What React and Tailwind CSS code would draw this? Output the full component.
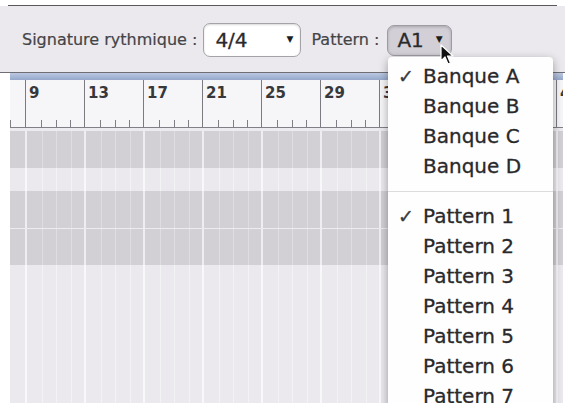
import React from "react";

const bars = [9, 13, 17, 21, 25, 29, 33, 37, 41, 45];
const banks = ["Banque A", "Banque B", "Banque C", "Banque D"];
const patterns = [1, 2, 3, 4, 5, 6, 7, 8];

function Ruler() {
  return (
    <div className="flex h-[48px] bg-[#f6f5f8] border-b border-[#808086] overflow-hidden">
      <div className="w-[15px] shrink-0 flex items-end">
        <div className="w-px h-[7px] bg-[#7e7e84]" />
      </div>
      {bars.map((n) => (
        <div key={n} className="w-[59px] shrink-0 border-l border-[#7a7a80] flex flex-col justify-between">
          <span className="pl-[3px] pt-[6px] text-[15px] font-bold leading-none text-[#38383a]">{n}</span>
          <div className="flex h-[7px]">
            {[0, 1, 2, 3].map((i) => (
              <div key={i} className="w-[14.75px] shrink-0 flex">
                {i > 0 && <div className="w-px h-full bg-[#7e7e84]" />}
              </div>
            ))}
          </div>
        </div>
      ))}
    </div>
  );
}

function Track({ className, dark }) {
  const bar = dark ? "border-[#efedf1]" : "border-[#f8f7fa]";
  const beat = dark ? "border-[#dfdce2]" : "border-[#f3f2f5]";
  return (
    <div className={`flex overflow-hidden ${dark ? "bg-[#d2cfd5]" : "bg-[#ebe9ee]"} ${className}`}>
      <div className="w-[15px] shrink-0" />
      {bars.map((n) => (
        <div key={n} className={`w-[59px] shrink-0 border-l-2 ${bar} flex`}>
          {[0, 1, 2, 3].map((i) => (
            <div key={i} className={`w-[14.5px] shrink-0 ${i > 0 ? `border-l ${beat}` : ""}`} />
          ))}
        </div>
      ))}
    </div>
  );
}

function Check() {
  return <span className="w-[25px] shrink-0 text-[19px] font-bold text-[#3a3a3c]">✓</span>;
}

export default function App() {
  return (
    <div className="w-[565px] h-[403px] relative overflow-hidden bg-white font-['DejaVu_Sans',sans-serif]">
      <div className="h-[5px]" />
      <div className="mx-[8px] h-px bg-[#58585c]" />

      {/* toolbar */}
      <div className="h-[66px] bg-[#ebe9ed] flex items-center pl-[22px] pt-[2px]">
        <span className="text-[16px] text-[#444447] whitespace-nowrap [-webkit-text-stroke:0.2px]">Signature rythmique :</span>
        <div className="ml-[6px] w-[98px] h-[34px] rounded-[7px] border border-[#a4a3a8] bg-white shadow-[inset_0_1px_2px_rgba(0,0,0,0.15)] flex items-center pl-[11px] pr-[7px] justify-between">
          <span className="text-[20px] text-[#2a2a2c] [-webkit-text-stroke:0.3px]">4/4</span>
          <span className="text-[9px] text-[#1e1e1e]">▼</span>
        </div>
        <span className="ml-[10px] text-[16px] text-[#444447] whitespace-nowrap [-webkit-text-stroke:0.2px]">Pattern :</span>
        <div className="ml-[8px] w-[65px] h-[31px] rounded-[7px] border border-[#9e9ca3] bg-[#d2cfd6] shadow-[inset_0_1px_3px_rgba(0,0,0,0.2)] flex items-center pl-[9px] gap-[12px]">
          <span className="text-[20px] text-[#2a2a2c] [-webkit-text-stroke:0.3px]">A1</span>
          <span className="text-[9px] text-[#1e1e1e]">▼</span>
        </div>
      </div>

      <div className="h-px bg-[#6e6e74]" />

      <div className="pl-[10px] pr-[2px]">
        <div className="h-[7px] bg-gradient-to-b from-[#bcc8e2] to-[#97a8cb]" />
        <Ruler />
        <div className="h-[3px] bg-[#ecebef]" />
        <Track dark className="h-[37px]" />
        <Track className="h-[23px]" />
        <Track dark className="h-[37px]" />
        <div className="h-px bg-[#ecebef]" />
        <Track dark className="h-[36px]" />
        <Track className="h-[140px]" />
      </div>

      {/* dropdown menu */}
      <div className="absolute left-[388px] top-[57px] w-[165px] h-[360px] bg-[#fefefe] rounded-[4px] shadow-[0_3px_10px_rgba(0,0,0,0.35)] pt-[4px] text-[20px] text-[#29292b] [-webkit-text-stroke:0.3px]">
        {banks.map((b, i) => (
          <div key={b} className="h-[30px] flex items-center pl-[10px]">
            {i === 0 ? <Check /> : <span className="w-[25px] shrink-0" />}
            <span>{b}</span>
          </div>
        ))}
        <div className="h-[20px] flex items-center">
          <div className="w-full h-px bg-[#dcdcdf]" />
        </div>
        {patterns.map((p, i) => (
          <div key={p} className="h-[30px] flex items-center pl-[10px]">
            {i === 0 ? <Check /> : <span className="w-[25px] shrink-0" />}
            <span>Pattern {p}</span>
          </div>
        ))}
      </div>

      {/* mouse pointer */}
      <svg className="absolute left-[440px] top-[44px]" width="14" height="22" viewBox="0 0 14 22">
        <path d="M1 1 L1 17 L5 13 L8 20 L10.5 19 L7.5 12 L13 12 Z" fill="#111" stroke="#fff" strokeWidth="1.2" strokeLinejoin="round" />
      </svg>
    </div>
  );
}
